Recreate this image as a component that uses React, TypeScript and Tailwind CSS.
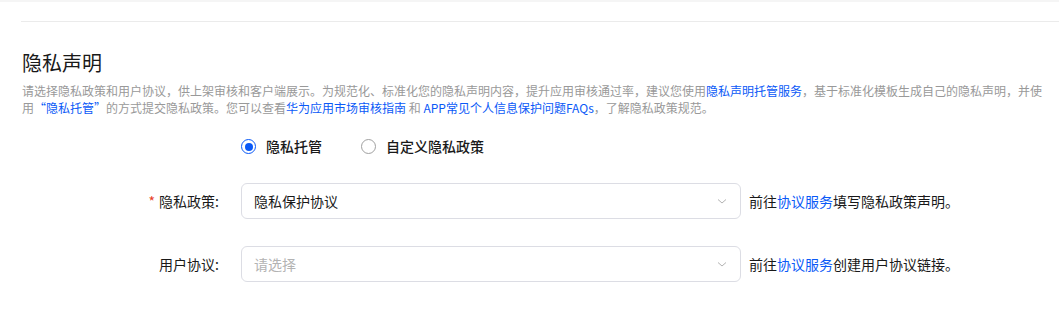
import { useState } from "react";

const font = { fontFamily: '"Noto Sans CJK SC", "Noto Sans", sans-serif' };

function Chevron() {
  return (
    <svg width="12" height="12" viewBox="0 0 12 12" className="text-[#b3b3b3]">
      <path d="M2 4.5 L6 8 L10 4.5" fill="none" stroke="currentColor" strokeWidth="1" />
    </svg>
  );
}

function Radio({ checked, label, onClick }: { checked: boolean; label: string; onClick: () => void }) {
  return (
    <button type="button" onClick={onClick} className="flex items-center gap-[10px] cursor-pointer">
      <span
        className={
          checked
            ? "w-[15px] h-[15px] rounded-full border-[1.5px] border-[#0a59f7] flex items-center justify-center"
            : "w-[15px] h-[15px] rounded-full border border-[#a0a0a0]"
        }
      >
        {checked && <span className="w-[8px] h-[8px] rounded-full bg-[#0a59f7]" />}
      </span>
      <span className="text-[14px] font-medium text-[#191919]">{label}</span>
    </button>
  );
}

function SelectRow({
  label,
  required,
  value,
  placeholder,
  tip,
}: {
  label: string;
  required?: boolean;
  value?: string;
  placeholder?: string;
  tip: string;
}) {
  return (
    <div className="flex items-center">
      <div className="w-[229px] pr-[10px] text-right text-[14px] text-[#191919]">
        {required && <span className="text-[#e84026] mr-[4px]">*</span>}
        {label}:
      </div>
      <div className="w-[500px] h-[36px] ml-[12px] border border-[#dcdde4] rounded-[6px] flex items-center justify-between pl-[12px] pr-[12px]">
        <span className={value ? "text-[14px] text-[#191919]" : "text-[14px] text-[#b3b3b3]"}>
          {value || placeholder}
        </span>
        <Chevron />
      </div>
      <div className="ml-[8px] text-[14px] text-[#191919]">
        前往<span className="text-[#0a59f7]">协议服务</span>
        {tip}
      </div>
    </div>
  );
}

export default function App() {
  const [mode, setMode] = useState(0);
  return (
    <div className="w-[1059px] h-[329px] bg-white overflow-hidden" style={font}>
      <div className="h-[2px] bg-[#f5f5f5]" />
      <div className="pl-[21px]">
        <div className="h-[19px]" />
        <div className="h-px bg-[#ebebeb]" />
      </div>
      <div className="pl-[22px] pt-[27px]">
        <h2 className="text-[20px] leading-[28px] text-[#191919]">隐私声明</h2>
        <p className="mt-[5px] text-[12px] leading-[17px] text-[#999999] whitespace-nowrap">
          请选择隐私政策和用户协议，供上架审核和客户端展示。为规范化、标准化您的隐私声明内容，提升应用审核通过率，建议您使用
          <span className="text-[#0a59f7]">隐私声明托管服务</span>
          ，基于标准化模板生成自己的隐私声明，并使
          <br />
          用<span className="text-[#0a59f7]">“隐私托管”</span>的方式提交隐私政策。您可以查看
          <span className="text-[#0a59f7]">华为应用市场审核指南</span> 和{" "}
          <span className="text-[#0a59f7]">APP常见个人信息保护问题FAQs</span>，了解隐私政策规范。
        </p>
      </div>
      <div className="flex items-center gap-[39px] pl-[241px] mt-[20px]">
        <Radio checked={mode === 0} label="隐私托管" onClick={() => setMode(0)} />
        <Radio checked={mode === 1} label="自定义隐私政策" onClick={() => setMode(1)} />
      </div>
      <div className="mt-[26px] flex flex-col gap-[27px]">
        <SelectRow label="隐私政策" required value="隐私保护协议" tip="填写隐私政策声明。" />
        <SelectRow label="用户协议" placeholder="请选择" tip="创建用户协议链接。" />
      </div>
    </div>
  );
}
